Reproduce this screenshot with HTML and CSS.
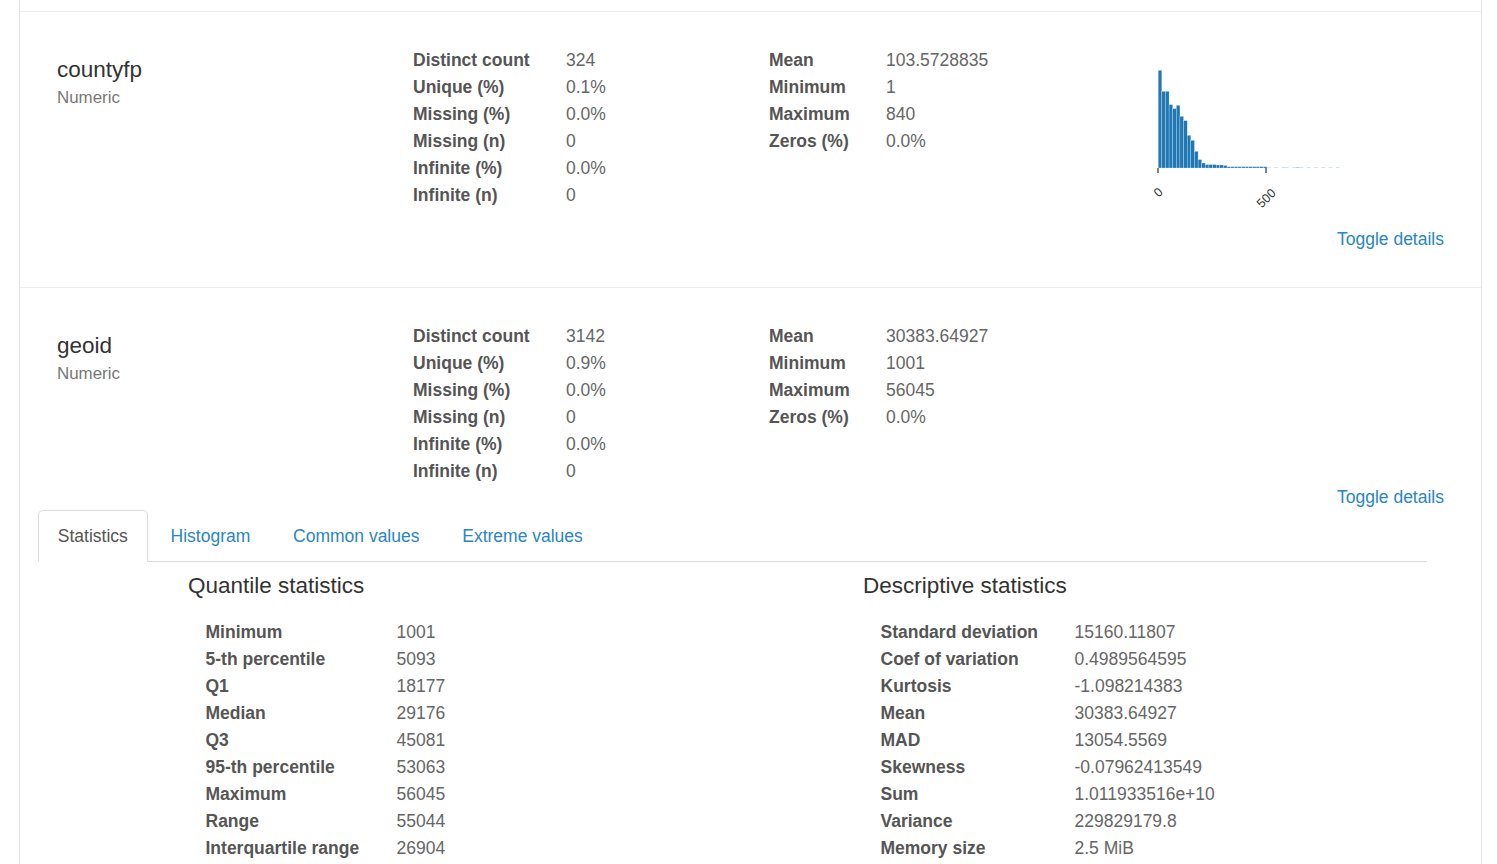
FILE: index.html
```html
<!DOCTYPE html>
<html>
<head>
<meta charset="utf-8">
<title>Profile</title>
<link rel="stylesheet" href="styles.css">
</head>
<body>
<div class="panel">
  <div class="prev"></div>

  <section class="var first">
    <div class="grid">
      <div class="col">
        <p class="name">countyfp<br><small>Numeric</small></p>
      </div>
      <div class="col">
        <table class="stats s1">
          <tr><th>Distinct count</th><td>324</td></tr>
          <tr><th>Unique (%)</th><td>0.1%</td></tr>
          <tr><th>Missing (%)</th><td>0.0%</td></tr>
          <tr><th>Missing (n)</th><td>0</td></tr>
          <tr><th>Infinite (%)</th><td>0.0%</td></tr>
          <tr><th>Infinite (n)</th><td>0</td></tr>
        </table>
      </div>
      <div class="col">
        <table class="stats s2">
          <tr><th>Mean</th><td>103.5728835</td></tr>
          <tr><th>Minimum</th><td>1</td></tr>
          <tr><th>Maximum</th><td>840</td></tr>
          <tr><th>Zeros (%)</th><td>0.0%</td></tr>
        </table>
      </div>
      <div class="col">
        <svg class="hist" width="318" height="180" viewBox="0 0 318 180">
          <g fill="#1f77b4" stroke="#e8f1f8" stroke-width="0.3">
            <rect x="33.2" y="23.3" width="3.63" height="97.7"/>
            <rect x="36.83" y="44.3" width="3.63" height="76.7"/>
            <rect x="40.45" y="44.3" width="3.63" height="76.7"/>
            <rect x="44.08" y="57.6" width="3.63" height="63.4"/>
            <rect x="47.7" y="61.6" width="3.63" height="59.4"/>
            <rect x="51.33" y="58.3" width="3.63" height="62.7"/>
            <rect x="54.95" y="69.3" width="3.63" height="51.7"/>
            <rect x="58.58" y="73.6" width="3.63" height="47.4"/>
            <rect x="62.2" y="88.3" width="3.63" height="32.7"/>
            <rect x="65.83" y="93.3" width="3.63" height="27.7"/>
            <rect x="69.45" y="104.3" width="3.63" height="16.7"/>
            <rect x="73.08" y="112.6" width="3.63" height="8.4"/>
            <rect x="76.7" y="116" width="3.63" height="5"/>
            <rect x="80.33" y="117.6" width="3.63" height="3.4"/>
            <rect x="83.95" y="117.6" width="3.63" height="3.4"/>
            <rect x="87.58" y="117.6" width="3.63" height="3.4"/>
            <rect x="91.2" y="118" width="3.63" height="3"/>
            <rect x="94.83" y="118" width="3.63" height="3"/>
            <rect x="98.45" y="118.5" width="3.63" height="2.5"/>
            <rect x="102.08" y="119.7" width="3.63" height="1.3"/>
            <rect x="105.7" y="119.7" width="3.63" height="1.3"/>
            <rect x="109.33" y="119.7" width="3.63" height="1.3"/>
            <rect x="112.95" y="119.7" width="3.63" height="1.3"/>
            <rect x="116.58" y="119.7" width="3.63" height="1.3"/>
            <rect x="120.2" y="119.7" width="3.63" height="1.3"/>
            <rect x="123.83" y="119.7" width="3.63" height="1.3"/>
            <rect x="127.45" y="119.7" width="3.63" height="1.3"/>
            <rect x="131.08" y="119.7" width="3.63" height="1.3"/>
            <rect x="134.7" y="119.7" width="3.63" height="1.3"/>
            <rect x="138.33" y="119.7" width="3.63" height="1.3"/>
          </g>
          <g fill="#1f77b4" opacity="0.35">
            <rect x="141.95" y="120.4" width="3.6" height="0.6"/>
            <rect x="149.2" y="120.4" width="3.6" height="0.6"/>
            <rect x="156.45" y="120.4" width="3.6" height="0.6"/>
            <rect x="160.08" y="120.4" width="3.6" height="0.6"/>
            <rect x="167.33" y="120.4" width="3.6" height="0.6"/>
            <rect x="170.95" y="120" width="3.6" height="1"/>
            <rect x="174.58" y="120.4" width="3.6" height="0.6"/>
            <rect x="181.83" y="120.4" width="3.6" height="0.6"/>
            <rect x="189.08" y="120.4" width="3.6" height="0.6"/>
            <rect x="196.33" y="120.4" width="3.6" height="0.6"/>
            <rect x="203.58" y="120.4" width="3.6" height="0.6"/>
            <rect x="210.83" y="120.4" width="3.6" height="0.6"/>
          </g>
          <g stroke="#333333" stroke-width="1.2">
            <line x1="33" y1="121" x2="33" y2="126"/>
            <line x1="141" y1="121" x2="141" y2="126"/>
          </g>
          <g class="tick" fill="#333333" font-size="12.5" text-anchor="middle">
            <text transform="translate(33,145) rotate(-45)" dy="4.5">0</text>
            <text transform="translate(141,151) rotate(-45)" dy="4.5">500</text>
          </g>
        </svg>
      </div>
    </div>
    <div class="toggle"><a href="#">Toggle details</a></div>
  </section>

  <section class="var last">
    <div class="grid">
      <div class="col">
        <p class="name">geoid<br><small>Numeric</small></p>
      </div>
      <div class="col">
        <table class="stats s1">
          <tr><th>Distinct count</th><td>3142</td></tr>
          <tr><th>Unique (%)</th><td>0.9%</td></tr>
          <tr><th>Missing (%)</th><td>0.0%</td></tr>
          <tr><th>Missing (n)</th><td>0</td></tr>
          <tr><th>Infinite (%)</th><td>0.0%</td></tr>
          <tr><th>Infinite (n)</th><td>0</td></tr>
        </table>
      </div>
      <div class="col">
        <table class="stats s2">
          <tr><th>Mean</th><td>30383.64927</td></tr>
          <tr><th>Minimum</th><td>1001</td></tr>
          <tr><th>Maximum</th><td>56045</td></tr>
          <tr><th>Zeros (%)</th><td>0.0%</td></tr>
        </table>
      </div>
      <div class="col"></div>
    </div>
    <div class="toggle"><a href="#">Toggle details</a></div>

    <div class="details">
      <ul class="tabs">
        <li class="active"><a href="#">Statistics</a></li>
        <li><a href="#">Histogram</a></li>
        <li><a href="#">Common values</a></li>
        <li><a href="#">Extreme values</a></li>
      </ul>
      <div class="tab-body">
        <div class="half">
          <p class="h4">Quantile statistics</p>
          <table class="stats s3">
            <tr><th>Minimum</th><td>1001</td></tr>
            <tr><th>5-th percentile</th><td>5093</td></tr>
            <tr><th>Q1</th><td>18177</td></tr>
            <tr><th>Median</th><td>29176</td></tr>
            <tr><th>Q3</th><td>45081</td></tr>
            <tr><th>95-th percentile</th><td>53063</td></tr>
            <tr><th>Maximum</th><td>56045</td></tr>
            <tr><th>Range</th><td>55044</td></tr>
            <tr><th>Interquartile range</th><td>26904</td></tr>
          </table>
        </div>
        <div class="half">
          <p class="h4">Descriptive statistics</p>
          <table class="stats s4">
            <tr><th>Standard deviation</th><td>15160.11807</td></tr>
            <tr><th>Coef of variation</th><td>0.4989564595</td></tr>
            <tr><th>Kurtosis</th><td>-1.098214383</td></tr>
            <tr><th>Mean</th><td>30383.64927</td></tr>
            <tr><th>MAD</th><td>13054.5569</td></tr>
            <tr><th>Skewness</th><td>-0.07962413549</td></tr>
            <tr><th>Sum</th><td>1.011933516e+10</td></tr>
            <tr><th>Variance</th><td>229829179.8</td></tr>
            <tr><th>Memory size</th><td>2.5 MiB</td></tr>
          </table>
        </div>
      </div>
    </div>
  </section>
</div>
</body>
</html>
```

FILE: styles.css
```css
* { box-sizing: border-box; }

html, body {
  margin: 0;
  padding: 0;
  background: #ffffff;
}

body {
  font-family: "Liberation Sans", Arial, sans-serif;
  font-size: 17.5px;
  line-height: 25px;
  color: #333333;
  overflow: hidden;
  height: 864px;
}

.panel {
  margin-left: 19px;
  width: 1463px;
  min-height: 864px;
  border-left: 1px solid #e3e3e3;
  border-right: 1px solid #e3e3e3;
}

.prev {
  height: 12px;
  border-bottom: 1px solid #eeeeee;
}

.var {
  padding: 34.5px 19px 34.5px 18px;
  border-bottom: 1px solid #eeeeee;
}

.var.first {
  padding-bottom: 35.5px;
}

.var.last {
  border-bottom: none;
  padding-bottom: 0;
}

.grid {
  display: grid;
  grid-template-columns: repeat(4, 356px);
  align-items: start;
}

.col {
  padding: 0 19px;
}

.name {
  margin: 10px 0 0 0;
  font-size: 22.5px;
  line-height: 26px;
  color: #333333;
}

.name small {
  font-size: 16.9px;
  line-height: 20px;
  color: #777777;
}

.stats {
  border-collapse: collapse;
  border-spacing: 0;
}

.stats th,
.stats td {
  padding: 0;
  line-height: 27px;
  text-align: left;
  vertical-align: top;
  white-space: nowrap;
}

.stats th {
  font-weight: bold;
  color: #555555;
}

.stats td {
  color: #666666;
}

.s1 th { width: 153px; }
.s2 th { width: 117px; }
.s3 th { width: 191px; }
.s4 th { width: 194px; }

.hist {
  display: block;
}

.tick text {
  font-family: "Liberation Sans", "DejaVu Sans", sans-serif;
}

.toggle {
  display: flex;
  justify-content: flex-end;
  padding-right: 18px;
}

.toggle a,
.tabs a {
  color: #2a86c2;
  text-decoration: none;
}

.details {
  width: 1389px;
  margin-top: 0.5px;
}

.tabs {
  list-style: none;
  margin: 0;
  padding: 0;
  display: flex;
  border-bottom: 1px solid #dddddd;
}

.tabs li {
  margin-right: 2.5px;
  margin-bottom: -1px;
}

.tabs li a {
  display: block;
  padding: 12.5px 18.75px;
  border: 1px solid transparent;
  border-radius: 5px 5px 0 0;
  line-height: 25px;
}

.tabs li + li a {
  padding-left: 19.5px;
}

.tabs li.active a {
  color: #555555;
  background: #ffffff;
  border-color: #dddddd #dddddd transparent #dddddd;
}

.tab-body {
  display: grid;
  grid-template-columns: 675px 1fr;
  padding-left: 150px;
}

.h4 {
  margin: 11.5px 0 21px 0;
  font-size: 22.5px;
  line-height: 24.75px;
  color: #333333;
}

.half .stats {
  margin-left: 17.5px;
}
```
